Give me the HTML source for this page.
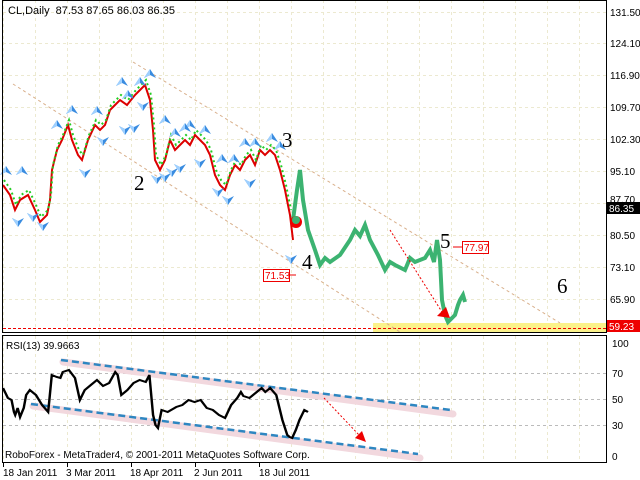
<!DOCTYPE html><html><head><style>
body{margin:0;width:640px;height:480px;background:#fff;overflow:hidden;font-family:"Liberation Sans",sans-serif}
svg{position:absolute;left:0;top:0}
</style></head><body>
<svg width="640" height="480" viewBox="0 0 640 480" font-family="Liberation Sans, sans-serif">
<defs>
<pattern id="g" width="32" height="480" patternUnits="userSpaceOnUse" x="3">
<line x1="0.5" y1="0" x2="0.5" y2="480" stroke="#ece9d0" stroke-dasharray="3,3"/>
</pattern>
<g id="up"><path d="M0 0 L-6 9 L0 6 L6 9Z" fill="#3a8ce0"/><path d="M0 0 L-6 9 L0 6Z" fill="#9fd0ff"/></g>
<g id="dn"><path d="M0 0 L-6 -9 L0 -6 L6 -9Z" fill="#3a8ce0"/><path d="M0 0 L-6 -9 L0 -6Z" fill="#9fd0ff"/></g>
</defs>
<rect x="3" y="1" width="603" height="331" fill="url(#g)"/>
<rect x="3" y="336" width="603" height="126" fill="url(#g)"/>
<g stroke="#ece9d0" stroke-dasharray="3,3">
<line x1="3" x2="606" y1="12.5" y2="12.5"/><line x1="3" x2="606" y1="43.5" y2="43.5"/><line x1="3" x2="606" y1="75.5" y2="75.5"/><line x1="3" x2="606" y1="107.5" y2="107.5"/><line x1="3" x2="606" y1="139.5" y2="139.5"/><line x1="3" x2="606" y1="171.5" y2="171.5"/><line x1="3" x2="606" y1="203.5" y2="203.5"/><line x1="3" x2="606" y1="235.5" y2="235.5"/><line x1="3" x2="606" y1="267.5" y2="267.5"/><line x1="3" x2="606" y1="299.5" y2="299.5"/>
</g>
<rect x="373" y="323" width="233" height="9" fill="#fbf28a"/>
<line x1="3" x2="606" y1="328.5" y2="328.5" stroke="#e00" stroke-dasharray="3,2"/>
<g stroke="#d9b08c" stroke-dasharray="3,3" fill="none">
<line x1="133" y1="62" x2="560" y2="323"/>
<line x1="13" y1="84" x2="400" y2="332"/>
</g>
<polyline fill="none" stroke="#d00" stroke-width="2" points="3,185 10,195 15,210 20,200 28,195 35,210 40,222 47,215 50,200 52,170 57,150 62,140 68,125 72,140 78,155 82,160 88,140 95,125 100,130 105,125 110,110 115,105 120,100 127,105 135,95 140,90 145,85 150,100 153,130 155,160 160,170 165,160 170,140 175,150 180,145 185,140 190,145 195,135 200,140 205,145 210,155 215,175 220,185 225,190 230,175 235,165 240,170 245,160 250,155 255,165 260,150 265,155 270,150 275,155 280,170 285,190 290,215 293,240"/>
<polyline fill="none" stroke="#2c2" stroke-width="2" stroke-dasharray="2,3" points="4,180 11,190 16,205 21,195 29,190 36,205 41,217 48,210 51,195 53,165 58,145 63,135 69,120 73,135 79,150 83,155 89,135 96,120 101,125 106,120 111,105 116,100 121,95 128,100 136,90 141,85 146,80 151,95 154,125 156,155 161,165 166,155 171,135 176,145 181,140 186,135 191,140 196,130 201,135 206,140 211,150 216,170 221,180 226,185 231,170 236,160 241,165 246,155 251,150 256,160 261,145 266,150 271,145 276,150 281,165 286,185 291,210"/>
<polyline fill="none" stroke="#3cb371" stroke-width="4" points="293,220 297,190 300,170 303,200 308,230 315,250 320,265 325,258 330,262 340,255 350,240 355,230 360,236 365,225 370,240 378,255 385,270 390,262 395,265 405,270 410,258 415,262 425,258 430,250 434,262 437,240 440,260 442,300 445,315 448,322 452,318 455,315 458,305 460,300 463,295 465,302"/>
<g>
<use href="#up" x="6" y="166"/><use href="#up" x="22" y="166"/><use href="#up" x="57" y="120"/><use href="#up" x="72" y="105"/><use href="#up" x="97" y="106"/><use href="#up" x="122" y="77"/><use href="#up" x="140" y="77"/><use href="#up" x="150" y="69"/><use href="#up" x="128" y="90"/><use href="#up" x="165" y="115"/><use href="#up" x="175" y="128"/><use href="#up" x="190" y="120"/><use href="#up" x="205" y="125"/><use href="#up" x="222" y="154"/><use href="#up" x="234" y="154"/><use href="#up" x="245" y="138"/><use href="#up" x="255" y="138"/><use href="#up" x="272" y="133"/><use href="#up" x="280" y="141"/><use href="#up" x="185" y="123"/>
<use href="#dn" x="18" y="227"/><use href="#dn" x="33" y="222"/><use href="#dn" x="43" y="231"/><use href="#dn" x="85" y="178"/><use href="#dn" x="103" y="146"/><use href="#dn" x="125" y="135"/><use href="#dn" x="134" y="133"/><use href="#dn" x="143" y="111"/><use href="#dn" x="157" y="184"/><use href="#dn" x="165" y="182"/><use href="#dn" x="172" y="177"/><use href="#dn" x="180" y="173"/><use href="#dn" x="200" y="168"/><use href="#dn" x="218" y="197"/><use href="#dn" x="228" y="205"/><use href="#dn" x="250" y="188"/><use href="#dn" x="291" y="264"/>
</g>
<circle cx="296" cy="222" r="6" fill="#e00"/><circle cx="296" cy="220" r="4" fill="#3cb371"/>
<line x1="390" y1="230" x2="442" y2="312" stroke="#e00" stroke-dasharray="2,2"/>
<path d="M450 318 L437 316 L446 307Z" fill="#e00"/>
<g font-family="Liberation Serif, serif" font-size="21" fill="#000">
<text x="134" y="190">2</text><text x="282" y="147">3</text><text x="302" y="269">4</text><text x="440" y="248">5</text><text x="557" y="293">6</text>
</g>
<line x1="453" y1="247" x2="462" y2="247" stroke="#e00"/>
<rect x="462.5" y="241.5" width="26" height="12" fill="#fff" stroke="#e00"/><text x="464" y="251" font-size="10" fill="#e00">77.97</text>
<line x1="289" y1="275" x2="296" y2="275" stroke="#e00"/>
<rect x="263.5" y="269.5" width="26" height="12" fill="#fff" stroke="#e00"/><text x="265" y="279" font-size="10" fill="#e00">71.53</text>
<text x="8" y="14" font-size="11" fill="#000">CL,Daily&#160; 87.53 87.65 86.03 86.35</text>
<rect x="2.5" y="0.5" width="604" height="332" fill="none" stroke="#000"/>
<rect x="2.5" y="335.5" width="604" height="127" fill="none" stroke="#000"/>
<g font-size="10" fill="#000">
<text x="610" y="16">131.50</text><text x="610" y="47">124.10</text><text x="610" y="79">116.90</text><text x="610" y="111">109.70</text><text x="610" y="143">102.30</text><text x="610" y="175">95.10</text><text x="610" y="203">87.70</text><text x="610" y="239">80.50</text><text x="610" y="271">73.10</text><text x="610" y="303">65.90</text>
</g>
<rect x="607" y="202" width="33" height="12" fill="#000"/><text x="609" y="212" font-size="10" fill="#fff">86.35</text>
<rect x="607" y="320" width="33" height="12" fill="#e00"/><text x="609" y="330" font-size="10" fill="#fff">59.23</text>
<!-- RSI -->
<g stroke="#bbb" stroke-dasharray="3,3"><line x1="3" x2="606" y1="373.5" y2="373.5"/><line x1="3" x2="606" y1="399.5" y2="399.5"/><line x1="3" x2="606" y1="425.5" y2="425.5"/></g>
<g stroke="#f2d8de" stroke-width="7" stroke-linecap="round"><line x1="63" y1="362" x2="453" y2="414"/><line x1="33" y1="406" x2="420" y2="458"/></g>
<g stroke="#2e86c1" stroke-width="2.5" stroke-dasharray="7,4"><line x1="61" y1="360" x2="451" y2="410"/><line x1="31" y1="404" x2="418" y2="454"/></g>
<polyline fill="none" stroke="#000" stroke-width="2" transform="translate(3,0) scale(1.22,1) translate(-3,0)" points="3,388 7,398 10,400 12,412 13,415 15,408 17,417 20,408 22,395 25,390 30,395 35,405 40,412 41,400 43,375 47,377 50,378 52,372 57,370 62,378 66,400 70,390 75,385 80,380 85,386 90,383 95,372 97,375 100,395 105,390 110,383 115,380 120,382 123,375 126,415 128,425 130,428 133,410 138,412 145,407 150,405 155,400 160,402 165,400 170,408 175,410 180,415 185,418 190,405 195,398 198,392 200,396 205,398 210,393 215,388 218,392 222,388 227,395 232,420 236,435 238,437 240,438 243,430 246,420 250,410 253,412"/>
<line x1="324" y1="398" x2="360" y2="436" stroke="#e00" stroke-dasharray="2,2"/>
<path d="M366 442 L355 438 L362 431Z" fill="#e00"/>
<text x="6" y="349" font-size="10" fill="#000">RSI(13) 39.9663</text>
<text x="5" y="458" font-size="10" fill="#000">RoboForex - MetaTrader4, © 2001-2011 MetaQuotes Software Corp.</text>
<g font-size="10" fill="#000"><text x="612" y="347">100</text><text x="612" y="377">70</text><text x="612" y="403">50</text><text x="612" y="429">30</text><text x="612" y="460">0</text></g>
<g stroke="#000"><line x1="3.5" y1="463" x2="3.5" y2="467"/><line x1="67.5" y1="463" x2="67.5" y2="467"/><line x1="131.5" y1="463" x2="131.5" y2="467"/><line x1="195.5" y1="463" x2="195.5" y2="467"/><line x1="259.5" y1="463" x2="259.5" y2="467"/></g>
<g font-size="10" fill="#000"><text x="3" y="476">18 Jan 2011</text><text x="66" y="476">3 Mar 2011</text><text x="130" y="476">18 Apr 2011</text><text x="194" y="476">2 Jun 2011</text><text x="259" y="476">18 Jul 2011</text></g>
</svg>
</body></html>
